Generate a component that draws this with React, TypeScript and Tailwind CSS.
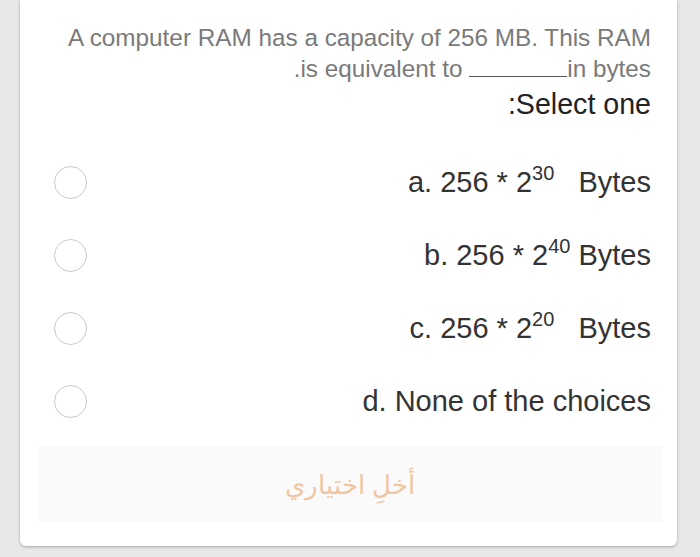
import React from "react"

const options = [
  { label: "a. 256 * 2", exp: "30", tail: "   Bytes" },
  { label: "b. 256 * 2", exp: "40", tail: " Bytes" },
  { label: "c. 256 * 2", exp: "20", tail: "   Bytes" },
  { label: "d. None of the choices", exp: "", tail: "" },
]

export default function App() {
  return (
    <div className="w-[700px] h-[557px] bg-[#e8e8e8] overflow-hidden font-['Liberation_Sans',sans-serif]">
      <div className="ml-[20px] w-[657px] h-[546px] bg-white rounded-b-[6px] shadow-[0_1px_3px_rgba(0,0,0,0.3)] pr-[26px] pl-[18px] pt-[22px]">
        {/* Question */}
        <div className="text-right text-[24.3px] leading-[31px] text-[#7a7a7a]">
          <div>A computer RAM has a capacity of 256 MB. This RAM</div>
          <div className="whitespace-pre">
            .is equivalent to <span className="inline-block w-[98px] border-b border-[#555] align-baseline"></span>in bytes
          </div>
        </div>
        <div className="text-right text-[28.6px] leading-[36px] text-[#222] mt-[2px]">:Select one</div>

        {/* Options */}
        <div className="mt-[42px] flex flex-col gap-[37px]">
          {options.map((o) => (
            <div key={o.label} className="flex items-center justify-between h-[36px]">
              <div className="ml-[16px] w-[33px] h-[33px] rounded-full border-[1.5px] border-[#c8c8c8]" />
              <div className="text-[29px] leading-[36px] text-[#333] whitespace-pre">
                {o.label}
                {o.exp && <sup className="text-[20px] relative top-[-12px]">{o.exp}</sup>}
                {o.tail}
              </div>
            </div>
          ))}
        </div>

        {/* Clear choice */}
        <div className="mt-[27px] mr-[-11px] h-[76px] bg-[#fafafa] flex items-center justify-center">
          <span dir="rtl" className="text-[26px] text-[#f0c6a2] font-['Noto_Sans',sans-serif]">أخلِ اختياري</span>
        </div>
      </div>
    </div>
  )
}
